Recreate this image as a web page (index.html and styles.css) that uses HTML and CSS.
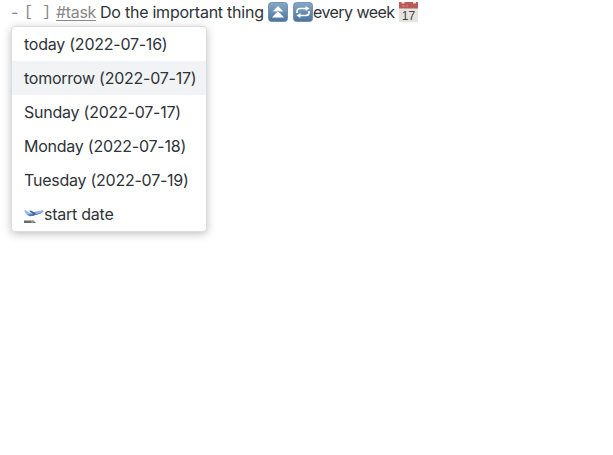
FILE: index.html
```
<!DOCTYPE html>
<html lang="en">
<head>
<meta charset="utf-8">
<title>Task</title>
<link rel="stylesheet" href="styles.css">
</head>
<body>
<main class="editor">
  <div class="line">
    <span class="dash">-</span>
    <span class="checkbox">[ ]</span>
    <span class="tag">#task</span>
    <span class="description">Do the important thing</span>
    <svg class="icon priority" viewBox="0 0 20 20">
      <defs><linearGradient id="blue" x1="0" y1="0" x2="0" y2="1"><stop offset="0" stop-color="#86a9c6"/><stop offset="1" stop-color="#4a759e"/></linearGradient></defs>
      <rect x=".5" y=".5" width="19" height="19" rx="3" fill="url(#blue)" stroke="#6685a2" stroke-width=".8"/>
      <path d="M10 4 15.500 9.500H4.500ZM10 9 16 15.500H4Z" fill="#fff"/>
      <path d="M5.500 10.200H8.500L10 8.800 11.500 10.200H14.500" fill="none" stroke="#7598b8" stroke-width=".8"/>
    </svg>
    <svg class="icon repeat" viewBox="0 0 20 20">
      <rect x=".5" y=".5" width="19" height="19" rx="3" fill="url(#blue)" stroke="#6685a2" stroke-width=".8"/>
      <path d="M4 11V9.500Q4 6.500 7 6.500H13M16 9V10.500Q16 13.500 13 13.500H7" fill="none" stroke="#fff" stroke-width="1.700"/>
      <path d="M12.500 4 16.500 6.500l-4 2.500ZM7.500 11 3.500 13.500l4 2.500Z" fill="#fff"/>
    </svg>
    <span class="recurrence">every week</span>
    <svg class="icon calendar" viewBox="0 0 20 20">
      <path d="M0 0h19v20H0Z" fill="#e6e4e2"/>
      <path d="M0 0h19v6.500H0Z" fill="#b9595a"/>
      <path d="M2.500 0h3v1.500h-3ZM14 0h3v1.500h-3Z" fill="#f3dddd"/>
      <path d="M3 4h3M7 4h2" stroke="#cf8585" stroke-width="1"/>
      <text class="day" x="9.500" y="18" text-anchor="middle">17</text>
    </svg>
  </div>
  <ul class="suggestions">
    <li class="item">today (2022-07-16)</li>
    <li class="item selected">tomorrow (2022-07-17)</li>
    <li class="item">Sunday (2022-07-17)</li>
    <li class="item">Monday (2022-07-18)</li>
    <li class="item">Tuesday (2022-07-19)</li>
    <li class="item">
      <svg class="plane" viewBox="0 0 20 20">
        <path d="M0 6.500 2 6.300 5 8.700 17 6.400Q20 6 20 7.300 19 9 15 10L6 12.300Q3 12 1.500 9Z" fill="#8db8e8"/>
        <path d="M3 10.200Q10 11 18.500 8.500 16 10 6 12.300Z" fill="#3c6cc0"/>
        <path d="M5 6.800 7 6.500 12 9.200 9.500 11.800 8 12 9 10Z" fill="#4b6688"/>
        <path d="M0 16.500h9.500l2.500 2.500H0Z" fill="#686868"/>
        <path d="M7 18h3" stroke="#bbb" stroke-width="1"/>
      </svg>start date
    </li>
  </ul>
</main>
</body>
</html>
```
FILE: styles.css
```
* { box-sizing: border-box; }
body {
  min-height: 100vh;
  margin: 0;
  background: #fff;
  color: #2e3338;
  font: 16px/24px Inter, "Liberation Sans", sans-serif;
}
.editor { min-height: 100vh; padding: 0 11px; }
.line {
  display: flex;
  height: 26px;
  white-space: pre;
}
.dash { width: 13px; color: #888; }
.checkbox {
  width: 32px;
  padding-top: 1px;
  color: #888;
  font-family: "Liberation Mono", monospace;
  font-size: 15px;
}
.tag {
  width: 44px;
  color: #888;
  letter-spacing: -.35px;
  text-decoration: underline;
  text-underline-offset: 2px;
}
.description { width: 168px; letter-spacing: -.24px; }
.icon { width: 20px; height: 20px; margin-top: 2px; flex: none; }
.priority { margin-right: 5px; }
.recurrence { width: 86px; letter-spacing: -.55px; }
.day { font: 500 12px "Liberation Sans", sans-serif; fill: #444; }
.suggestions {
  width: 196px;
  height: 206px;
  margin: 0;
  padding: 0;
  overflow: hidden;
  list-style: none;
  background: #fff;
  border: 1px solid #ddd;
  border-radius: 4px;
  box-shadow: 0 2px 8px rgba(0, 0, 0, .25);
}
.item {
  display: flex;
  align-items: center;
  height: 34px;
  padding-left: 12px;
  white-space: nowrap;
  letter-spacing: -.24px;
}
.selected { background: #f2f3f5; }
.plane { width: 20px; height: 20px; flex: none; }
```
